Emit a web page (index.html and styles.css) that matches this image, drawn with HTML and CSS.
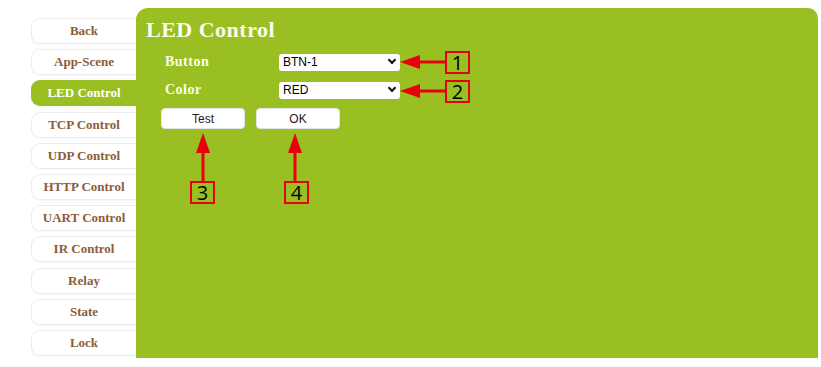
FILE: index.html
```html
<!DOCTYPE html>
<html>
<head>
	<meta charset="utf-8">
	<title>LED Control</title>
	<link rel="stylesheet" href="styles.css">
</head>
<body>

<div class="page">
	<ul class="menu">
		<li><a href="#">Back</a></li>
		<li><a href="#">App-Scene</a></li>
		<li class="active"><a href="#">LED Control</a></li>
		<li><a href="#">TCP Control</a></li>
		<li><a href="#">UDP Control</a></li>
		<li><a href="#">HTTP Control</a></li>
		<li><a href="#">UART Control</a></li>
		<li><a href="#">IR Control</a></li>
		<li><a href="#">Relay</a></li>
		<li><a href="#">State</a></li>
		<li><a href="#">Lock</a></li>
	</ul>

	<div class="panel">
		<h1>LED Control</h1>
		<div class="row">
			<label for="btn">Button</label>
			<div class="select"><span>BTN-1</span><i></i></div>
		</div>
		<div class="row">
			<label for="color">Color</label>
			<div class="select"><span>RED</span><i></i></div>
		</div>
		<div class="actions">
			<button class="butan">Test</button>
			<button class="butan">OK</button>
		</div>
	</div>
</div>

<svg class="notes" width="821" height="367" viewBox="0 0 821 367">
	<g stroke="#e8000b" stroke-width="3" fill="#e8000b">
		<line x1="416" y1="62" x2="446" y2="62"/>
		<polygon points="400,62 420,55 420,69" stroke="none"/>
		<line x1="416" y1="91" x2="446" y2="91"/>
		<polygon points="400,91 420,84 420,98" stroke="none"/>
		<line x1="203" y1="150" x2="203" y2="182"/>
		<polygon points="203,133 196,153 210,153" stroke="none"/>
		<line x1="295" y1="150" x2="295" y2="182"/>
		<polygon points="295,133 288,153 302,153" stroke="none"/>
	</g>
</svg>
<div class="tag t1">1</div>
<div class="tag t2">2</div>
<div class="tag t3">3</div>
<div class="tag t4">4</div>

</body>
</html>
```

FILE: styles.css
```css
body {
	margin: 0;
	background: white;
	font-family: "Liberation Serif", serif;
}
.page {
	display: flex;
	padding-top: 8px;
	height: 350px;
}

.menu {
	list-style: none;
	margin: 10px 0 0 31px;
	padding: 0;
	width: 105px;
}
.menu li {
	height: 26px;
	margin-bottom: 5.2px;
	border: 1px solid #ececec;
	border-right: none;
	border-radius: 9px 0 0 9px;
	box-sizing: border-box;
	text-align: center;
	box-shadow: 0 1px 1px rgba(0, 0, 0, .03);
}
.menu a {
	display: block;
	line-height: 24px;
	font-size: 13px;
	font-weight: bold;
	color: #8c5c3a;
	text-decoration: none;
}
.menu li.active {
	background: #9abf22;
	border-color: #9abf22;
}
.menu li.active a {
	color: white;
}

.panel {
	flex: 1;
	margin-right: 3px;
	background: #9abf22;
	border-radius: 12px 10px 0 0;
	padding: 9px 0 0 10px;
}
.panel h1 {
	margin: 0 0 5px 0;
	font-size: 22px;
	letter-spacing: .5px;
	line-height: 26px;
	color: #fbfbee;
}
.row {
	display: flex;
	align-items: center;
	height: 28px;
}
.row label {
	width: 114px;
	padding-left: 19px;
	font-size: 14px;
	letter-spacing: .5px;
	font-weight: bold;
	color: #fbfbee;
}
.select {
	display: flex;
	align-items: center;
	justify-content: space-between;
	width: 121px;
	height: 17px;
	box-sizing: border-box;
	padding: 0 5px 0 4px;
	background: white;
	border-radius: 3px;
	font-family: "Liberation Sans", sans-serif;
	font-size: 12px;
	color: black;
}
.select i {
	width: 4px;
	height: 4px;
	border-right: 2px solid #111;
	border-bottom: 2px solid #111;
	transform: translateY(-2px) rotate(45deg);
}

.actions {
	display: flex;
	gap: 11px;
	padding: 4px 0 0 15px;
}
.butan {
	width: 84px;
	height: 21px;
	padding: 0;
	border: 1px solid #e4e4e4;
	border-radius: 4px;
	background: white;
	font-family: "Liberation Sans", sans-serif;
	font-size: 12px;
	color: #222;
}

.notes {
	position: absolute;
	left: 0;
	top: 0;
}
.tag {
	position: absolute;
	width: 21px;
	height: 19px;
	border: 2px solid #e8000b;
	font-family: "Open Sans", sans-serif;
	font-size: 20px;
	line-height: 19px;
	text-align: center;
	color: black;
}
.t1 { left: 445px; top: 51px; }
.t2 { left: 445px; top: 80px; }
.t3 { left: 190px; top: 181px; }
.t4 { left: 284px; top: 181px; }
```
